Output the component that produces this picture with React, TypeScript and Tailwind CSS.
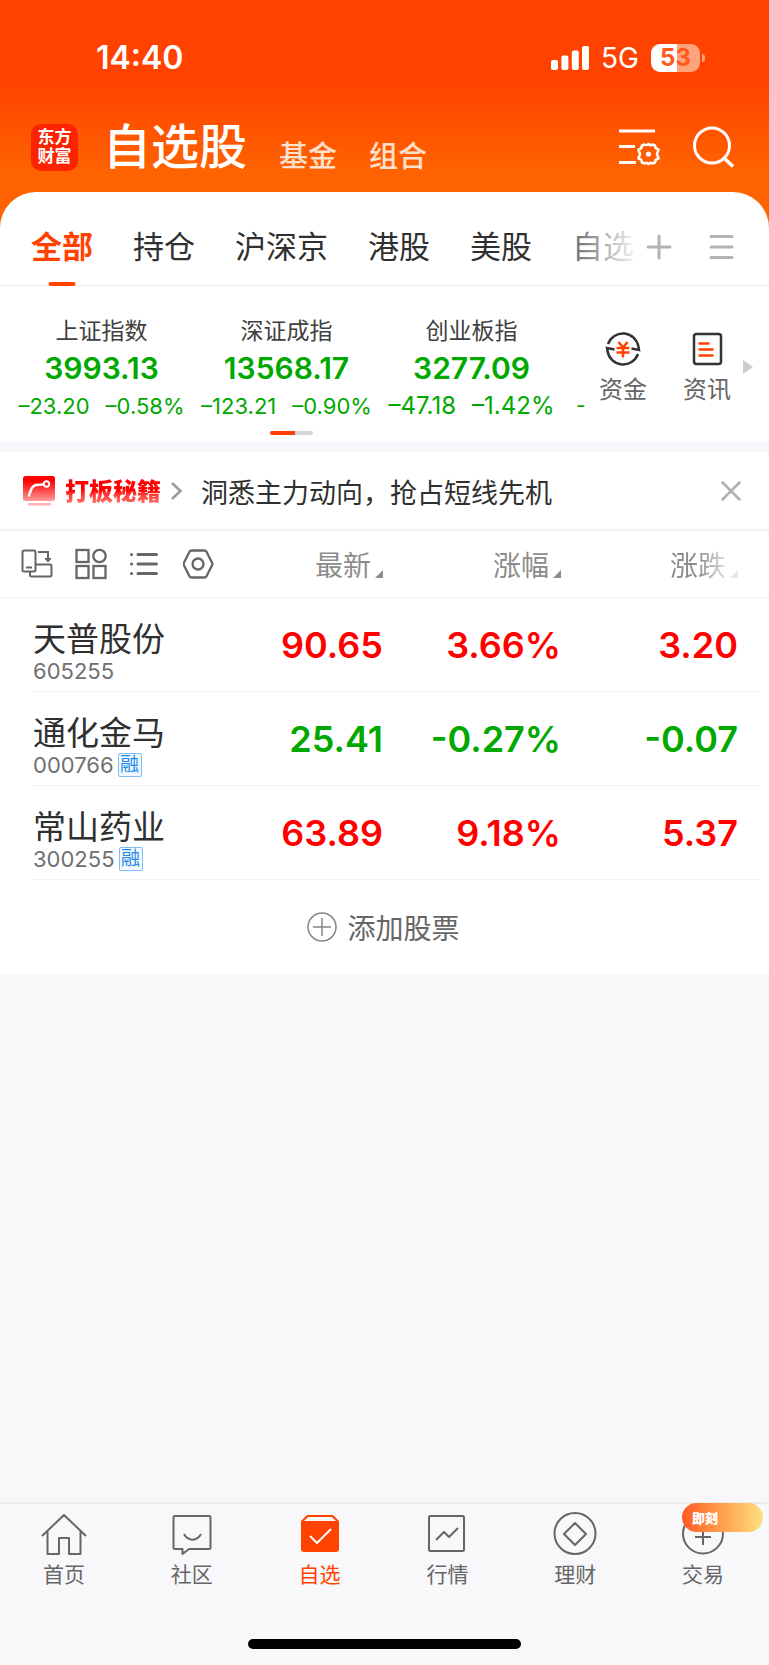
import { useState } from 'react'
import type { ReactNode } from 'react'
import clsx from 'clsx'

const GRUPOS = ['全部', '持仓', '沪深京', '港股', '美股', '自选']

const INDICES = [
  { nombre: '上证指数', valor: '3993.13', cambio: '–23.20', pct: '–0.58%', texto: 'text-[22px]' },
  { nombre: '深证成指', valor: '13568.17', cambio: '–123.21', pct: '–0.90%', texto: 'text-[22px]' },
  { nombre: '创业板指', valor: '3277.09', cambio: '–47.18', pct: '–1.42%', texto: 'text-[24px]' },
]

const ACCIONES = [
  { codigo: '605255', nombre: '天普股份', margen: false, precio: '90.65', pct: '3.66%', cambio: '3.20', sube: true },
  { codigo: '000766', nombre: '通化金马', margen: true, precio: '25.41', pct: '-0.27%', cambio: '-0.07', sube: false },
  { codigo: '300255', nombre: '常山药业', margen: true, precio: '63.89', pct: '9.18%', cambio: '5.37', sube: true },
]

const COLUMNAS = [
  { nombre: '最新', ancho: 'w-[150px]' },
  { nombre: '涨幅', ancho: 'w-[178px]' },
  { nombre: '涨跌', ancho: 'w-[177px]' },
]

function BarraEstado() {
  return (
    <div className="flex h-[114px] items-center justify-between pl-24 pr-16 pt-0.5 text-white">
      <span className="text-[32px] font-semibold leading-10">14:40</span>
      <div className="flex items-center">
        <svg width="38" height="24" viewBox="0 0 38 24" fill="currentColor" aria-hidden="true">
          <rect x="0" y="14" width="7" height="10" rx="2" />
          <rect x="10.4" y="9.5" width="7" height="14.5" rx="2" />
          <rect x="20.8" y="4.5" width="7" height="19.5" rx="2" />
          <rect x="31" y="0" width="7" height="24" rx="2" />
        </svg>
        <span className="ml-3 text-[28px] leading-8">5G</span>
        <span className="ml-3 flex h-7 w-[49px] items-center justify-center rounded-[9px] bg-[linear-gradient(to_right,#fff_54%,#ffa37c_54%)] text-2xl font-bold leading-7 text-[#ff5a1c]">
          53
        </span>
        <span className="ml-0.5 h-2 w-[3px] rounded-r-full bg-[#ffa37c]" />
      </div>
    </div>
  )
}

function Cabecera() {
  return (
    <header className="flex h-[78px] items-center justify-between pb-3 pl-[31px] pr-[34px]">
      <div className="flex items-center">
        <div className="grid h-[47px] w-[47px] place-content-center rounded-[10px] bg-[#ff2200] text-center text-[17px] font-bold leading-[19px] text-white">
          <span>东方</span>
          <span>财富</span>
        </div>
        <div className="ml-[25px] flex items-end">
          <h1 className="text-[48px] font-medium leading-[60px] text-white">自选股</h1>
          <button type="button" className="ml-8 text-[29px] font-medium leading-10 text-[#ffe0cc]">基金</button>
          <button type="button" className="ml-8 text-[29px] font-medium leading-10 text-[#ffe0cc]">组合</button>
        </div>
      </div>
      <div className="flex items-center gap-8 text-white">
        <button type="button" aria-label="列表设置">
          <svg width="42" height="38" viewBox="0 0 42 38" fill="none" stroke="currentColor" strokeWidth="3">
            <path d="M0 3h36M0 18.500h16M0 34.500h17" />
            <path
              d="M25.500 16.500c2 1 2.500 1 4-.5 1.500 1.500 2.500 1.500 4 .5l2.500 1c0 2.500 1 3.500 3.500 4 .2 1.500-1.500 3-1.500 4.500s1.700 3 1.500 4.500c-2.500.5-3.500 1.500-3.500 4l-2.500 1c-1.500-1-2.500-1-4 .5-1.500-1.500-2.500-1.500-4-.5l-2.500-1c0-2.500-1-3.500-3.500-4-.2-1.500 1.500-3 1.500-4.500s-1.700-3-1.500-4.500c2.500-.5 3.500-1.500 3.500-4z"
              strokeWidth="2.500"
              strokeLinejoin="round"
            />
            <circle cx="29.500" cy="26" r="2.600" fill="currentColor" stroke="none" />
          </svg>
        </button>
        <button type="button" aria-label="搜索">
          <svg width="42" height="42" viewBox="0 0 42 42" fill="none" stroke="currentColor" strokeWidth="3">
            <circle cx="19" cy="19.500" r="17.500" />
            <path d="M31 32l9 8.500" strokeWidth="3.500" />
          </svg>
        </button>
      </div>
    </header>
  )
}

function Grupos() {
  const [activo, setActivo] = useState('全部')

  return (
    <nav className="flex h-[94px] items-stretch rounded-t-[36px] bg-white pr-[35px] shadow-[inset_0_-1px_0_#ebebeb]">
      <div className="relative flex min-w-0 flex-1 gap-10 overflow-hidden pl-[31px]">
        {GRUPOS.map((g) => (
          <button
            key={g}
            type="button"
            onClick={() => setActivo(g)}
            className={clsx(
              'relative shrink-0 whitespace-nowrap pt-4 text-[31px] leading-10',
              g === activo ? 'font-bold text-[#ff4200]' : 'text-[#303030]',
            )}
          >
            {g}
            {g === activo && (
              <span className="absolute bottom-0 left-1/2 h-1 w-[27px] -translate-x-1/2 rounded-sm bg-[#ff4200]" />
            )}
          </button>
        ))}
        <span className="pointer-events-none absolute bottom-1 right-0 top-10 w-[62px] bg-linear-to-r from-white/30 to-white/95" />
      </div>
      <div className="ml-2.5 flex items-center gap-[37px] pt-4 text-[#b3b3b3]">
        <button type="button" aria-label="添加分组">
          <svg width="26" height="26" viewBox="0 0 26 26" stroke="currentColor" strokeWidth="3" strokeLinecap="round">
            <path d="M13 2v22M2 13h22" />
          </svg>
        </button>
        <button type="button" aria-label="分组管理">
          <svg width="25" height="26" viewBox="0 0 25 26" stroke="currentColor" strokeWidth="3" strokeLinecap="round">
            <path d="M2 2.500h21M2 13h21M2 23.500h21" />
          </svg>
        </button>
      </div>
    </nav>
  )
}

function Indices() {
  return (
    <section className="flex bg-white pr-4">
      <div className="min-w-0 flex-1 overflow-hidden pb-[7px] pr-1 pt-7">
        <div className="flex pl-[9px] text-[#00a800]">
          {INDICES.map((i) => (
            <div key={i.nombre} className="w-[185px] shrink-0 whitespace-nowrap text-center">
              <div className="text-[23px] leading-[34px] text-[#404040]">{i.nombre}</div>
              <div className="text-[30px] font-semibold leading-10">{i.valor}</div>
              <div className={clsx('flex justify-center gap-4 leading-9', i.texto)}>
                <span>{i.cambio}</span>
                <span>{i.pct}</span>
              </div>
            </div>
          ))}
          <div className="shrink-0 self-end pl-3 text-[21px] leading-9">-</div>
        </div>
        <div className="mx-auto mt-[7px] h-1 w-[43px] overflow-hidden rounded-sm bg-[#d2d5dc]">
          <div className="h-1 w-[25px] bg-[#ff4200]" />
        </div>
      </div>
      <div className="flex gap-3 pt-[45px] text-2xl leading-[30px] text-[#666]">
        <button type="button" className="flex w-[72px] flex-col items-center gap-2">
          <svg width="36" height="36" viewBox="0 0 36 36" fill="none" stroke="#333" strokeWidth="2.500">
            <path d="M3 13a15.800 15.800 0 0 1 30.500 3l.5 3-7.500-1.500" />
            <path d="M33 23a15.800 15.800 0 0 1-30.500-3l-.5-3 7.500 1.500" />
            <path d="M13.500 11l4.500 5.500 4.500-5.500M11.500 17h13M11.500 21.500h13M18 16v10.500" stroke="#ff4200" />
          </svg>
          资金
        </button>
        <button type="button" className="flex w-[72px] flex-col items-center gap-2">
          <svg width="36" height="36" viewBox="0 0 36 36" fill="none" stroke="#333" strokeWidth="2.500">
            <rect x="5" y="3" width="27" height="30" rx="2.500" />
            <path d="M10.500 12.500h9M10.500 18.500h13M10.500 24.500h13" stroke="#ff4200" strokeLinecap="round" />
          </svg>
          资讯
        </button>
      </div>
      <svg width="10" height="14" viewBox="0 0 10 14" fill="#ccc" className="mt-[74px]" aria-hidden="true">
        <path d="M0 0l10 7-10 7z" />
      </svg>
    </section>
  )
}

function Promo() {
  return (
    <section className="flex h-[79px] items-center border-b-2 border-[#f3f4f6] bg-white pl-[23px] pr-[27px]">
      <svg width="32" height="30" viewBox="0 0 32 30" fill="none" aria-hidden="true">
        <defs>
          <linearGradient id="promo" x1="0" y1="0" x2="0" y2="1">
            <stop offset="0.2" stopColor="#ff0000" />
            <stop offset="1" stopColor="#ff9a9a" />
          </linearGradient>
        </defs>
        <rect width="32" height="25" rx="2.500" fill="url(#promo)" />
        <path d="M6 19.500c2-6 3-9.500 7-10.500l7.500-.5" stroke="#fff" strokeWidth="2.500" strokeLinecap="round" />
        <circle cx="23.500" cy="8" r="2.700" stroke="#fff" strokeWidth="2" />
        <rect x="5" y="27" width="23" height="2.500" rx="1" fill="#ffb3b3" />
      </svg>
      <a href="#promo" className="ml-2.5 flex items-center">
        <span className="bg-linear-to-b from-[#ff0000] from-50% to-[#ff8080] bg-clip-text pt-0.5 text-2xl font-black leading-8 text-transparent">
          打板秘籍
        </span>
        <svg width="12" height="20" viewBox="0 0 12 20" fill="none" stroke="#999" strokeWidth="2.500" className="ml-2.5">
          <path d="M1 2l8.500 8L1 18" />
        </svg>
      </a>
      <p className="ml-[18px] flex-1 pt-1.5 text-[27px] leading-9 text-[#303030]">洞悉主力动向，抢占短线先机</p>
      <button type="button" aria-label="关闭" className="text-[#b0b0b0]">
        <svg width="22" height="22" viewBox="0 0 22 22" stroke="currentColor" strokeWidth="2.500" strokeLinecap="round">
          <path d="M2.500 2.500l17 17M19.500 2.500l-17 17" />
        </svg>
      </button>
    </section>
  )
}

function HerramientasVista() {
  return (
    <div className="flex items-center gap-[22px] text-[#666]">
      <button type="button" aria-label="横屏">
        <svg width="32" height="30" viewBox="0 0 32 30" fill="none" stroke="currentColor" strokeWidth="2">
          <rect x="1.500" y="1.500" width="13" height="21" rx="1.500" />
          <path d="M5 18.500h6M17 3h10v9M14.500 15.500H29a1.500 1.500 0 0 1 1.500 1.500v9a1.500 1.500 0 0 1-1.500 1.500H10.500A1.500 1.500 0 0 1 9 26v-3.500" />
          <path d="M24 9.500h6L27 13z" fill="currentColor" strokeWidth="1" />
        </svg>
      </button>
      <button type="button" aria-label="宫格">
        <svg width="32" height="32" viewBox="0 0 32 32" fill="none" stroke="currentColor" strokeWidth="2.300">
          <rect x="1.500" y="2" width="12" height="12" />
          <circle cx="24.500" cy="8" r="6.200" />
          <rect x="1.500" y="18" width="12" height="12" />
          <rect x="18.500" y="18" width="12" height="12" />
        </svg>
      </button>
      <button type="button" aria-label="列表">
        <svg width="32" height="26" viewBox="0 0 32 26" stroke="currentColor" strokeWidth="3" strokeLinecap="round">
          <path d="M9 3.500h18.500M9 13h18.500M9 22.500h18.500M2.500 3.500h.1M2.500 13h.1M2.500 22.500h.1" />
        </svg>
      </button>
      <button type="button" aria-label="设置">
        <svg width="32" height="30" viewBox="0 0 32 30" fill="none" stroke="currentColor" strokeWidth="2.300" strokeLinejoin="round">
          <path d="M8.500 1.500h13c1 0 1.500.4 2 1.200l5.600 11c.5.900.5 1.700 0 2.600l-5.600 11c-.5.800-1 1.200-2 1.200h-13c-1 0-1.500-.4-2-1.200l-5.600-11c-.5-.9-.5-1.700 0-2.600l5.600-11c.5-.8 1-1.200 2-1.200z" />
          <circle cx="15" cy="15" r="5.500" />
        </svg>
      </button>
    </div>
  )
}

function TablaAcciones() {
  return (
    <table className="block bg-white">
      <thead className="block">
        <tr className="flex h-[67px] items-center border-b border-[#f0f0f2] pl-[21px] pr-[31px]">
          <th className="flex-1 font-normal">
            <HerramientasVista />
          </th>
          {COLUMNAS.map((c, i) => (
            <th key={c.nombre} className={clsx('shrink-0 pt-1 font-normal', c.ancho)}>
              <button
                type="button"
                className={clsx(
                  'ml-auto flex items-end gap-1 text-[28px] leading-9 text-[#8c8c8c]',
                  i === COLUMNAS.length - 1 && 'mask-[linear-gradient(to_right,#000_40%,#0003_85%)]',
                )}
              >
                {c.nombre}
                <svg width="8" height="8" viewBox="0 0 8 8" fill="#8c8c99" className="mb-1.5" aria-hidden="true">
                  <path d="M8 0v8H0z" />
                </svg>
              </button>
            </th>
          ))}
        </tr>
      </thead>
      <tbody className="block pl-8 pr-[9px]">
        {ACCIONES.map((a) => (
          <tr
            key={a.codigo}
            className={clsx(
              'flex h-[94px] items-center border-b border-[#f3f3f5] pr-[22px] text-right text-[36px] font-semibold leading-[44px]',
              a.sube ? 'text-[#ff0000]' : 'text-[#00a800]',
            )}
          >
            <td className="flex-1 pl-px pt-4 text-left font-normal">
              <div className="text-[33px] leading-9 text-[#303030]">{a.nombre}</div>
              <div className="flex h-7 items-center gap-1 text-[22px] leading-7 text-[#707070]">
                {a.codigo}
                {a.margen && (
                  <span className="grid h-6 w-6 place-content-center rounded-xs border border-[#7dbcf5] bg-[#f2f8fe] text-[19px] leading-5 text-[#1f8ae8]">
                    融
                  </span>
                )}
              </div>
            </td>
            <td className="w-[150px]">{a.precio}</td>
            <td className="w-[178px]">{a.pct}</td>
            <td className="w-[177px]">{a.cambio}</td>
          </tr>
        ))}
      </tbody>
    </table>
  )
}

const PESTANAS: { nombre: string; icono: ReactNode }[] = [
  {
    nombre: '首页',
    icono: <path d="M1 23L23 2l22 21M6.500 18.500V41H18V25h10v16h11.500V18.500" />,
  },
  {
    nombre: '社区',
    icono: (
      <>
        <path d="M6 3h34a1.500 1.500 0 0 1 1.500 1.500v30A1.500 1.500 0 0 1 40 36H20l-6.500 5v-5H6a1.500 1.500 0 0 1-1.500-1.500v-30A1.500 1.500 0 0 1 6 3z" />
        <path d="M15 21c4 7.500 13 7.500 17 0" />
      </>
    ),
  },
  {
    nombre: '自选',
    icono: (
      <>
        <path d="M10 2h26l6 6v28a3 3 0 0 1-3 3H7a3 3 0 0 1-3-3V8z" fill="#ff4200" stroke="none" />
        <path d="M11 4h24l4 4H7z" fill="#f8f8fb" stroke="none" />
        <path d="M13 23l7 7 14-14" stroke="#fff" />
      </>
    ),
  },
  {
    nombre: '行情',
    icono: (
      <>
        <rect x="5" y="3" width="35" height="35" rx="1.500" />
        <path d="M12 27l8-8 5 5 9-9" />
      </>
    ),
  },
  {
    nombre: '理财',
    icono: (
      <>
        <circle cx="23" cy="20.500" r="20.500" />
        <path d="M23 10l11 11-11 11-11-11z" />
      </>
    ),
  },
  {
    nombre: '交易',
    icono: (
      <>
        <circle cx="23" cy="20.500" r="20" />
        <path d="M23 15v17M15 24h16" />
      </>
    ),
  },
]

function BarraInferior() {
  return (
    <nav className="border-t-2 border-[#ebebee] pb-4 pt-[9px]">
      <div className="grid grid-cols-6 pr-0.5">
        {PESTANAS.map(({ nombre, icono }) => (
          <button
            key={nombre}
            type="button"
            className={clsx(
              'relative flex flex-col items-center gap-0.5 text-[21px] leading-8',
              nombre === '自选' ? 'text-[#ff4200]' : 'text-[#666]',
            )}
          >
            <svg
              width="46"
              height="44"
              viewBox="0 0 46 44"
              fill="none"
              stroke="currentColor"
              strokeWidth="2"
              strokeLinejoin="round"
              className="overflow-visible"
            >
              {icono}
            </svg>
            {nombre}
            {nombre === '交易' && (
              <span className="absolute -top-2.5 right-1 flex h-[29px] w-[81px] items-center rounded-full bg-linear-to-r from-[#ff5722] via-[#ffa04d] to-[#ffdf80] pl-2.5 text-[13px] font-black text-white">
                即刻
              </span>
            )}
          </button>
        ))}
      </div>
      <div className="mx-auto mt-12 h-2.5 w-[273px] rounded-full bg-black" />
    </nav>
  )
}

export default function App() {
  return (
    <div className="flex min-h-screen flex-col bg-[#f8f8fb] font-[Inter,'Noto_Sans_CJK_SC',sans-serif]">
      <div className="bg-[linear-gradient(to_bottom,#ff4200_80px,#ff6200_170px)]">
        <BarraEstado />
        <Cabecera />
        <Grupos />
      </div>
      <main className="flex-1">
        <Indices />
        <div className="h-2.5 bg-[#f6f7fa]" />
        <Promo />
        <TablaAcciones />
        <div className="flex h-[94px] items-center justify-center bg-white pr-0.5">
          <button type="button" className="flex items-center gap-2.5 text-[28px] leading-9 text-[#666]">
            <svg width="30" height="30" viewBox="0 0 30 30" fill="none" stroke="#85858c" strokeWidth="1.500">
              <circle cx="15" cy="15" r="14" />
              <path d="M15 6v18M6 15h18" />
            </svg>
            <span className="pt-1">添加股票</span>
          </button>
        </div>
      </main>
      <BarraInferior />
    </div>
  )
}
